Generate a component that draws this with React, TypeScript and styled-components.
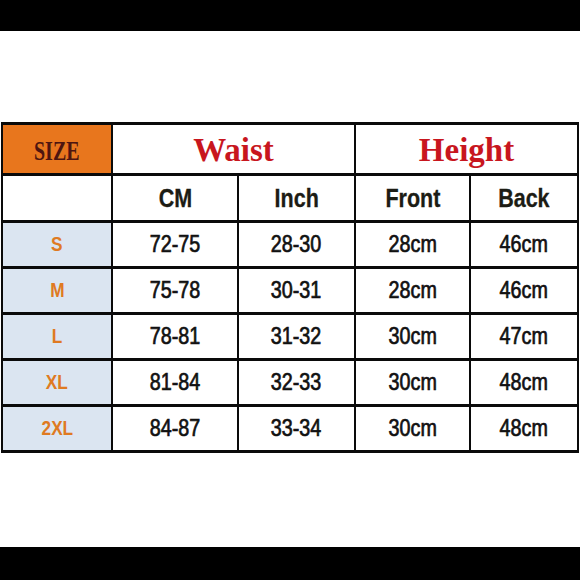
import React from "react";
import styled, { createGlobalStyle } from "styled-components";

const Global = createGlobalStyle`
  html, body { margin: 0; padding: 0; background: #ffffff; }
  body { font-family: "Liberation Sans", Arial, sans-serif; }
`;

const Page = styled.div`
  width: 580px;
  height: 580px;
  display: flex;
  flex-direction: column;
  background: #ffffff;
  overflow: hidden;
`;

const Bar = styled.div<{ $h: number }>`
  height: ${(p) => p.$h}px;
  flex: none;
  background: #000000;
`;

const Main = styled.div`
  flex: 1;
  padding: 91px 0 0 1px;
`;

const Table = styled.div`
  display: grid;
  width: 578px;
  box-sizing: border-box;
  grid-template-columns: 108px 124px 115px 113px 106px;
  grid-template-rows: 48px 44px repeat(5, 43px);
  column-gap: 2px;
  row-gap: 3px;
  background: #0a0a0a;
  border-style: solid;
  border-color: #0a0a0a;
  border-width: 3px 2px 3px 2px;
`;

const Cell = styled.div<{ $bg?: string; $span?: number }>`
  background: ${(p) => p.$bg ?? "#ffffff"};
  grid-column: span ${(p) => p.$span ?? 1};
  display: flex;
  align-items: center;
  justify-content: center;
  overflow: hidden;
`;

const SizeTitle = styled.span`
  display: inline-block;
  font-family: "Liberation Serif", "Times New Roman", serif;
  font-size: 27px;
  font-weight: 700;
  color: #4e1510;
  transform: scaleX(0.74);
  margin-top: 5px;
`;

const GroupTitle = styled.span`
  font-family: "Liberation Serif", "Times New Roman", serif;
  font-size: 33px;
  font-weight: 700;
  color: #c8161e;
  margin-top: 2px;
`;

const ColTitle = styled.span`
  display: inline-block;
  font-family: "Liberation Sans", Arial, sans-serif;
  font-size: 25px;
  font-weight: 700;
  color: #1c1c14;
  transform: scaleX(0.86);
  -webkit-text-stroke: 0.3px #1c1c14;
`;

const Value = styled.span`
  display: inline-block;
  font-family: "Liberation Sans", Arial, sans-serif;
  font-size: 23.5px;
  font-weight: 400;
  color: #111111;
  transform: scaleX(0.84);
  -webkit-text-stroke: 0.7px #111111;
`;

const SizeLabel = styled.span`
  display: inline-block;
  font-family: "Liberation Sans", Arial, sans-serif;
  font-size: 20px;
  font-weight: 700;
  color: #df7a22;
  transform: scaleX(0.86);
`;

const rows = [
  ["S", "72-75", "28-30", "28cm", "46cm"],
  ["M", "75-78", "30-31", "28cm", "46cm"],
  ["L", "78-81", "31-32", "30cm", "47cm"],
  ["XL", "81-84", "32-33", "30cm", "48cm"],
  ["2XL", "84-87", "33-34", "30cm", "48cm"],
];

export default function App() {
  return (
    <>
      <Global />
      <Page>
        <Bar $h={31} />
        <Main>
          <Table>
            <Cell $bg="#e8761d">
              <SizeTitle>SIZE</SizeTitle>
            </Cell>
            <Cell $span={2}>
              <GroupTitle>Waist</GroupTitle>
            </Cell>
            <Cell $span={2}>
              <GroupTitle>Height</GroupTitle>
            </Cell>

            <Cell />
            <Cell>
              <ColTitle>CM</ColTitle>
            </Cell>
            <Cell>
              <ColTitle>Inch</ColTitle>
            </Cell>
            <Cell>
              <ColTitle>Front</ColTitle>
            </Cell>
            <Cell>
              <ColTitle>Back</ColTitle>
            </Cell>

            {rows.map((r) => (
              <React.Fragment key={r[0]}>
                <Cell $bg="#dbe5f1">
                  <SizeLabel>{r[0]}</SizeLabel>
                </Cell>
                {r.slice(1).map((v, i) => (
                  <Cell key={i}>
                    <Value>{v}</Value>
                  </Cell>
                ))}
              </React.Fragment>
            ))}
          </Table>
        </Main>
        <Bar $h={33} />
      </Page>
    </>
  );
}
